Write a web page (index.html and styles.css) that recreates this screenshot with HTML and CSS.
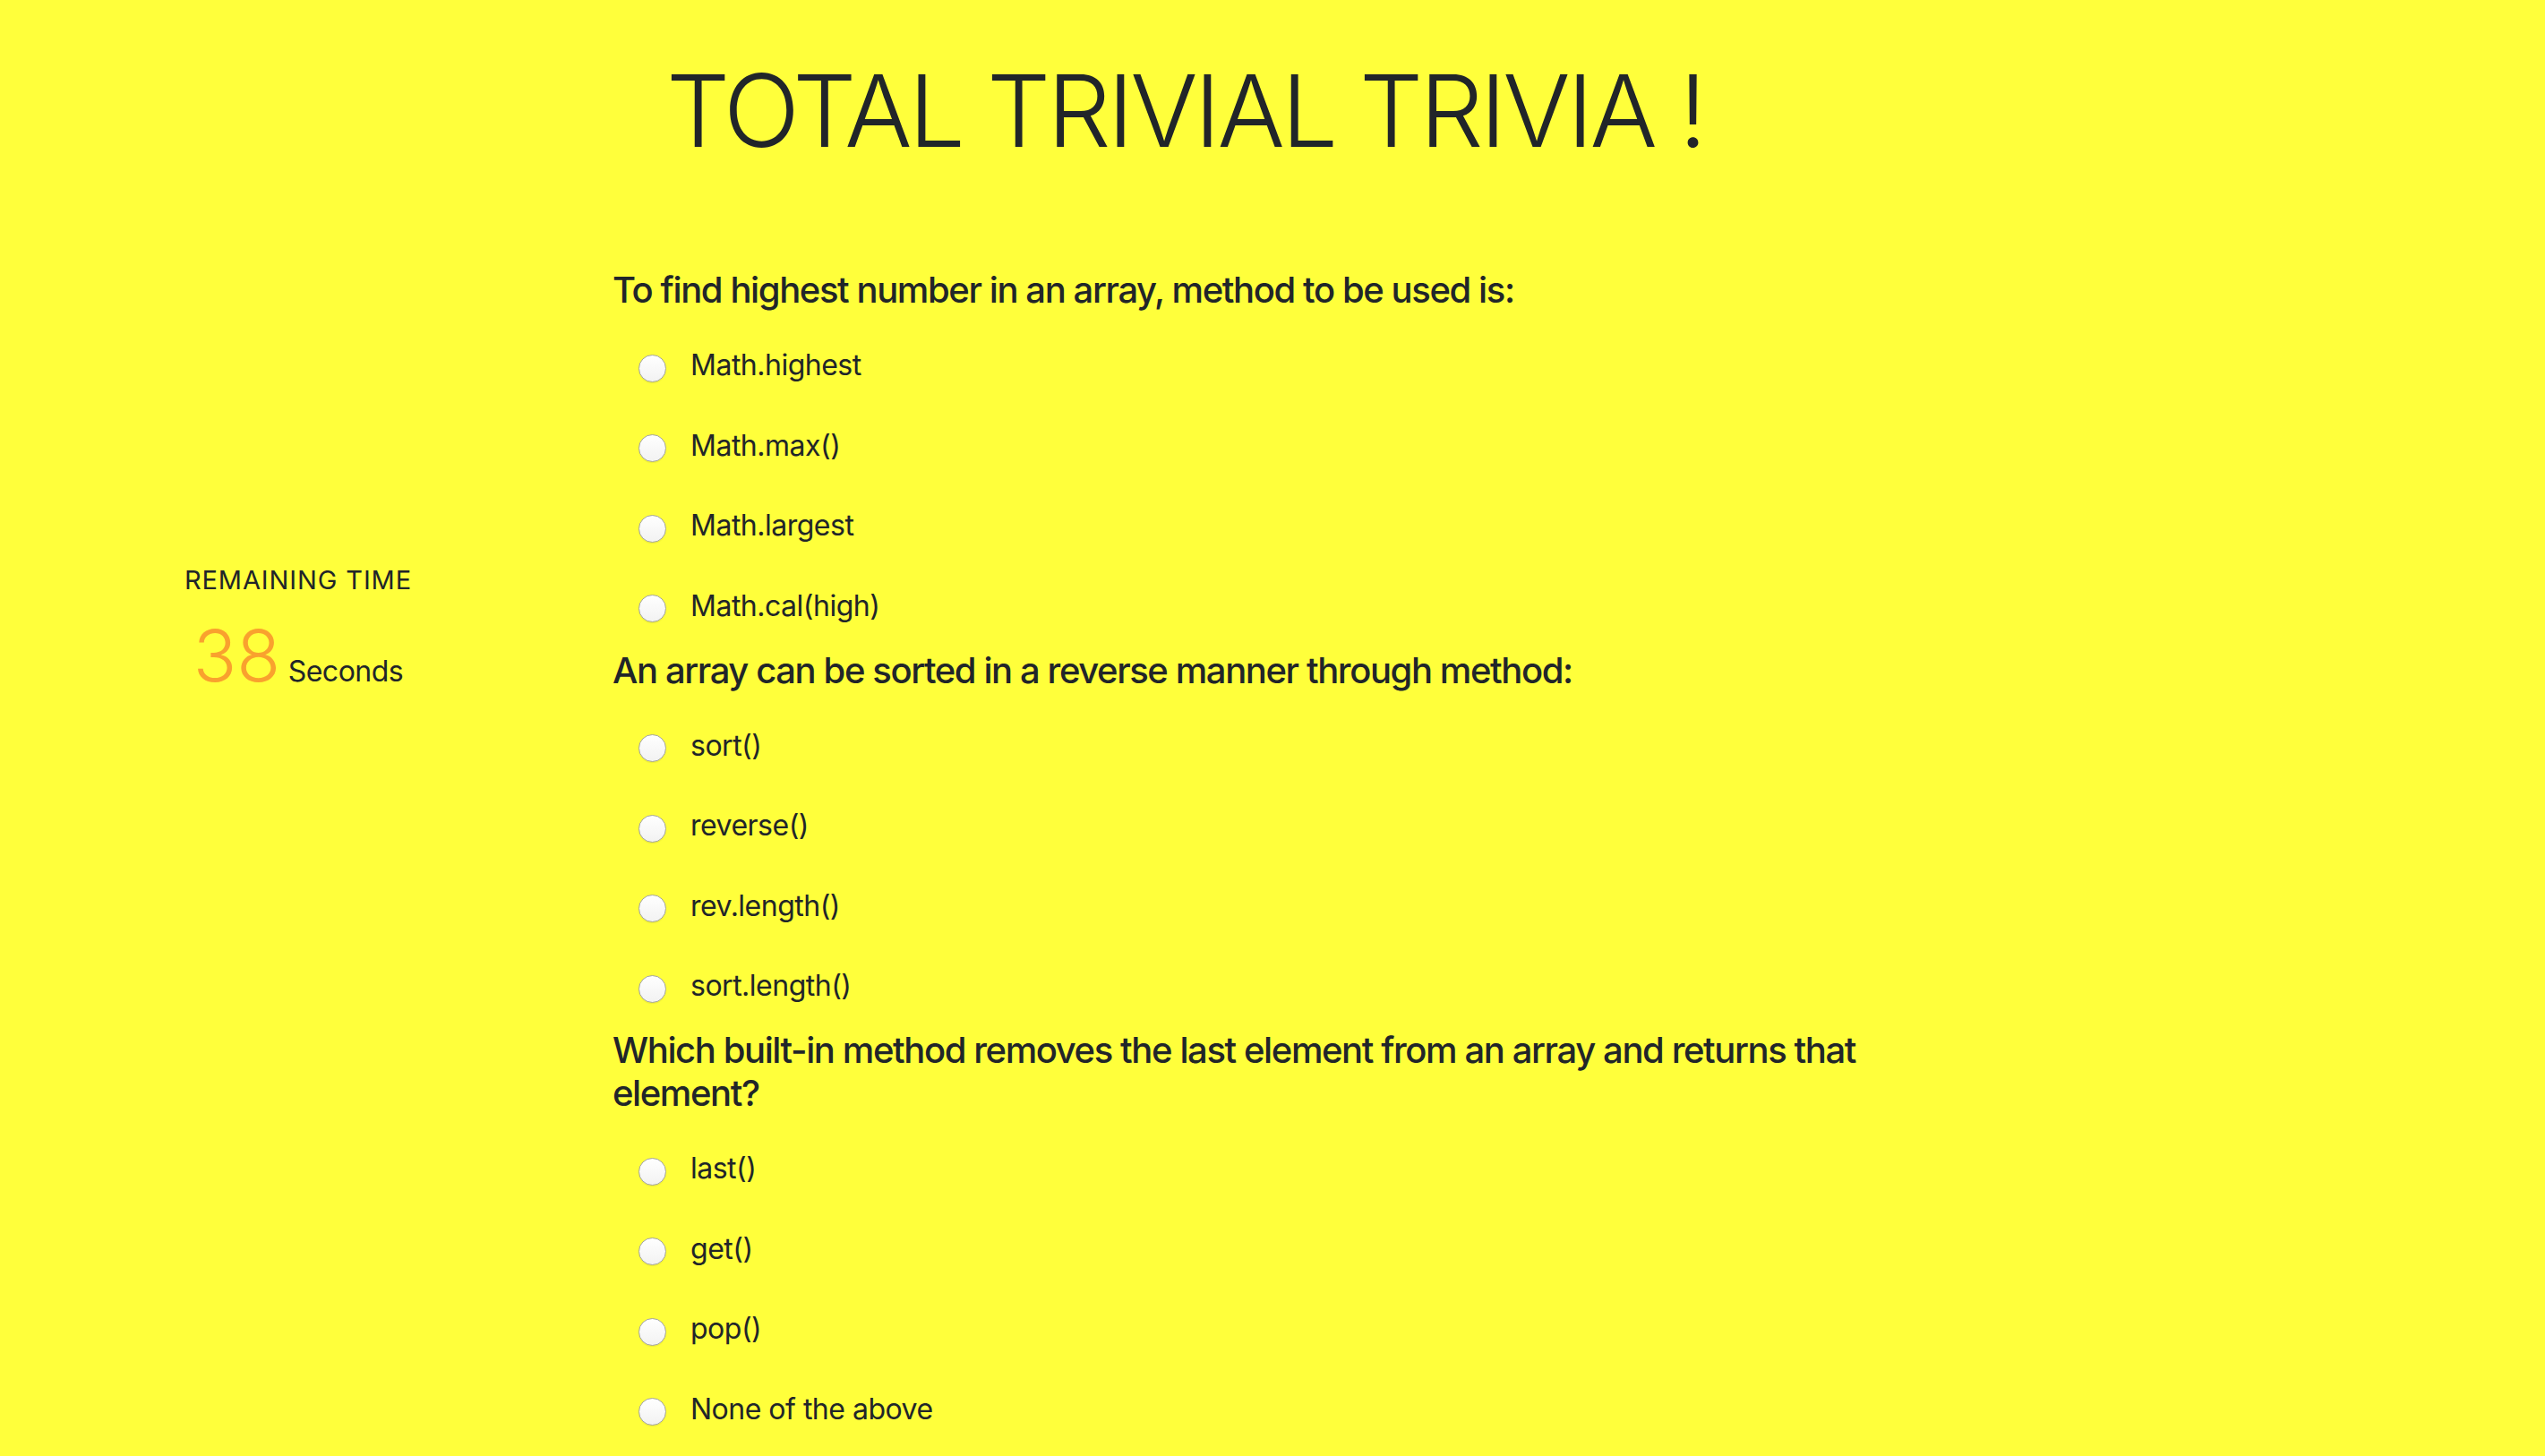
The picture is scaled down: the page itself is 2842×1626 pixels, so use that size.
FILE: index.html
```html
<!DOCTYPE html>
<html lang="en">
<head>
<meta charset="utf-8">
<title>Total Trivial Trivia</title>
<link rel="stylesheet" href="styles.css">
</head>
<body>
<header class="header">
  <h1 class="title">TOTAL TRIVIAL TRIVIA !</h1>
</header>
<main class="main">
  <aside class="timer">
    <div class="timer-label">REMAINING TIME</div>
    <div class="timer-value"><span class="timer-num">38</span><span class="timer-unit"> Seconds</span></div>
  </aside>
  <section class="quiz">
    <div class="question">
      <h5 class="q-text">To find highest number in an array, method to be used is:</h5>
      <div class="options">
        <label class="option"><input type="radio" name="q1" class="radio"><span>Math.highest</span></label>
        <label class="option"><input type="radio" name="q1" class="radio"><span>Math.max()</span></label>
        <label class="option"><input type="radio" name="q1" class="radio"><span>Math.largest</span></label>
        <label class="option"><input type="radio" name="q1" class="radio"><span>Math.cal(high)</span></label>
      </div>
    </div>
    <div class="question">
      <h5 class="q-text">An array can be sorted in a reverse manner through method:</h5>
      <div class="options">
        <label class="option"><input type="radio" name="q2" class="radio"><span>sort()</span></label>
        <label class="option"><input type="radio" name="q2" class="radio"><span>reverse()</span></label>
        <label class="option"><input type="radio" name="q2" class="radio"><span>rev.length()</span></label>
        <label class="option"><input type="radio" name="q2" class="radio"><span>sort.length()</span></label>
      </div>
    </div>
    <div class="question">
      <h5 class="q-text">Which built-in method removes the last element from an array and returns that element?</h5>
      <div class="options">
        <label class="option"><input type="radio" name="q3" class="radio"><span>last()</span></label>
        <label class="option"><input type="radio" name="q3" class="radio"><span>get()</span></label>
        <label class="option"><input type="radio" name="q3" class="radio"><span>pop()</span></label>
        <label class="option"><input type="radio" name="q3" class="radio"><span>None of the above</span></label>
      </div>
    </div>
  </section>
</main>
</body>
</html>
```
FILE: styles.css
```css
html, body {
  margin: 0;
  padding: 0;
}
body {
  background: #ffff3b;
  color: #212529;
  font-family: Inter, "Noto Sans", "Liberation Sans", sans-serif;
  overflow: hidden;
  height: 1626px;
}
.header {
  padding-top: 56px;
  padding-left: 744px;
}
.title {
  margin: 0;
  font-size: 112px;
  font-weight: 300;
  line-height: 1.2;
  letter-spacing: -3.8px;
}
.main {
  display: grid;
  grid-template-columns: 666px 1440px;
  column-gap: 18px;
  margin-top: 107px;
}
.timer {
  text-align: center;
  padding-top: 330px;
}
.timer-label {
  font-size: 29px;
  line-height: 42px;
  letter-spacing: 0.9px;
}
.timer-value {
  margin-top: 23px;
  font-size: 80px;
  line-height: 1;
}
.timer-num {
  font-weight: 300;
  color: #f9a12e;
}
.timer-unit {
  font-size: 32px;
  letter-spacing: -0.5px;
}
.quiz {
  padding-top: 3px;
}
.question {
  display: flex;
  flex-direction: column;
}
.q-text {
  margin: 0;
  font-size: 40px;
  font-weight: 500;
  line-height: 48px;
  letter-spacing: -1.4px;
}
.options {
  display: flex;
  flex-direction: column;
  gap: 41.5px;
  margin-top: 36px;
  margin-bottom: 24px;
}
.option {
  display: flex;
  align-items: center;
  height: 48px;
  font-size: 32px;
  line-height: 48px;
  letter-spacing: -0.5px;
}
.radio {
  appearance: none;
  -webkit-appearance: none;
  width: 31px;
  height: 31px;
  margin: 6px 27px 0 29px;
  border-radius: 50%;
  border: 1px solid #a3a3a3;
  background: linear-gradient(#ffffff, #f2f2f2);
  box-shadow: 0 1px 1px rgba(0, 0, 0, 0.08);
  flex: none;
  box-sizing: border-box;
}
```
